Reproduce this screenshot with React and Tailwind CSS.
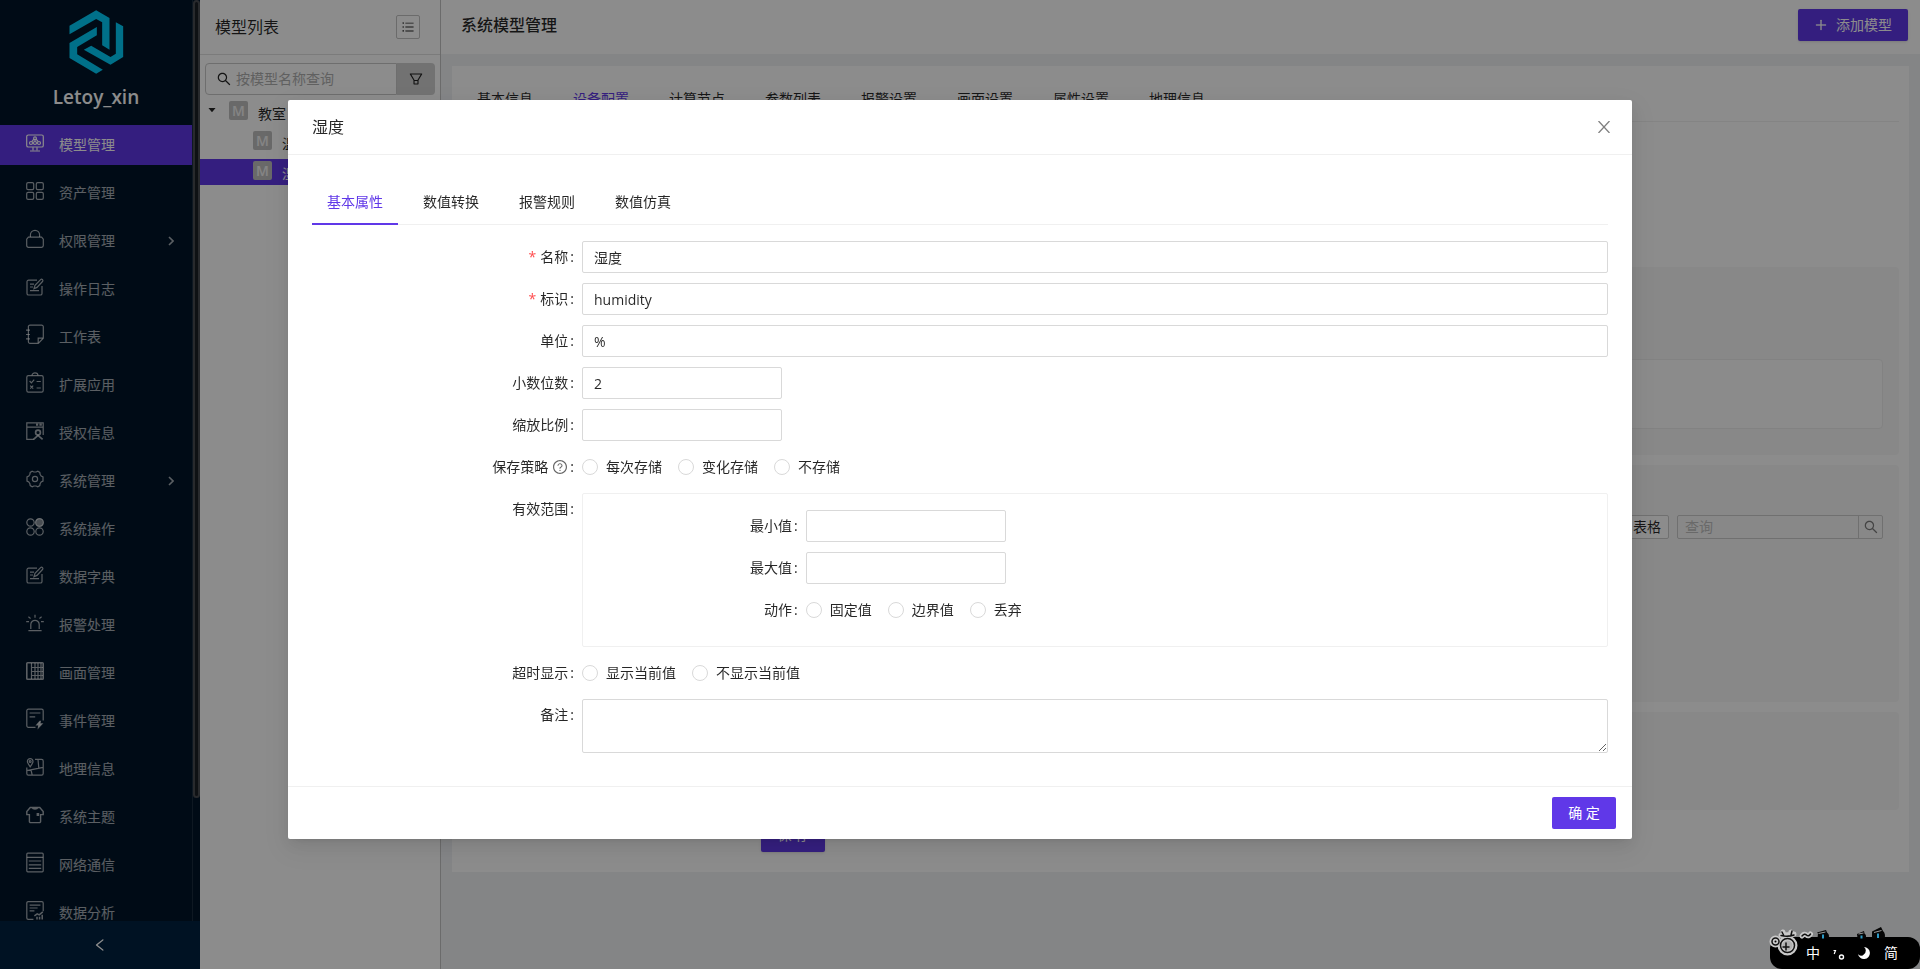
import React from "react";
import {
  AiOutlineFilter,
  AiOutlineLeft,
  AiOutlinePlus,
  AiOutlineQuestionCircle,
  AiOutlineSearch,
  AiOutlineUnorderedList,
  AiFillCaretDown,
} from "react-icons/ai";

const edit = (
  <>
    <path d="M11 2.2H2.6a1.6 1.6 0 0 0-1.6 1.6v11.6A1.6 1.6 0 0 0 2.6 17h11.8a1.6 1.6 0 0 0 1.6-1.6V8" />
    <path d="M8 10.6 9 7.4 14.6 1.6a1.3 1.3 0 0 1 1.9 1.9L11 9.4l-3 1.2Z M4 6.2h4 M4 9h3 M4 12.6h9" />
  </>
);

const icons = {
  model: (
    <>
      <rect x="0.7" y="1" width="16.6" height="12" rx="1.6" />
      <circle cx="9" cy="4.2" r="1.4" />
      <circle cx="5" cy="9" r="1.5" />
      <circle cx="9" cy="9" r="1.5" />
      <circle cx="13" cy="9" r="1.5" />
      <path d="M9 5.6v2M7.9 5.2 5.8 7.6M10.1 5.2l2.1 2.4M7 13.2v3M11 13.2v3M4 17h10" />
    </>
  ),
  asset: (
    <>
      <rect x="0.7" y="0.7" width="7" height="7" rx="1.4" />
      <rect x="10.3" y="0.7" width="7" height="7" rx="1.4" />
      <rect x="0.7" y="10.3" width="7" height="7" rx="1.4" />
      <rect x="10.3" y="10.3" width="7" height="7" rx="1.4" />
    </>
  ),
  lock: (
    <>
      <path d="M2.4 7.2h13.2l1.7 2v6.4a1.7 1.7 0 0 1-1.7 1.7H2.4a1.7 1.7 0 0 1-1.7-1.7V9.2l1.7-2Z" />
      <path d="M4.4 7V5a4.6 4.6 0 0 1 9.2 0v2" />
    </>
  ),
  edit,
  note: (
    <>
      <path d="M2.4 0.2A1.6 1.6 0 0 1 4-.9h11.6a1.7 1.7 0 0 1 1.7 1.7v11.400l-5 5.100H4a1.600 1.600 0 0 1-1.600-1.600V.2Z" />
      <path d="M12.2 17v-4.8H17M0 4.200h4M0 8.500h4M0 12.800h4" />
    </>
  ),
  clipboard: (
    <>
      <rect x="0.8" y="1.600" width="16.4" height="16.500" rx="1.6" />
      <path d="M6 1.600a3 2.800 0 0 1 6 0M3.6 7l1.8 1.8 2.8-3.2M10.6 7.500h4.2M4.2 11.600l3 3M7.2 11.600l-3 3M10.6 14h4.2" />
    </>
  ),
  license: (
    <>
      <path d="M8 17.3H.8V.8h16.4V13M.8 5.2h16.4" />
      <path d="M10 2.6h2.2M13.4 2.6h2.4" strokeWidth="2.2" />
      <circle cx="12" cy="10.6" r="2.4" strokeWidth="1.7" />
      <path d="M7.6 17.4 12 13.4l4.6 4" strokeWidth="1.7" />
    </>
  ),
  gear: (
    <>
      <path d="M6.2 1.2 7.8 2h2.4l1.6-.8 2 1.2.3 1.8 1.1 1.8 1.8.9v4.2l-1.8.9-1.1 1.8-.3 1.8-2 1.2-1.6-.8H7.8l-1.6.8-2-1.2-.3-1.8-1.1-1.8L1 11.100V6.900L2.800 6l1.100-1.800.300-1.800Z" />
      <circle cx="9" cy="9" r="2.6" />
    </>
  ),
  circles: (
    <>
      <circle cx="4.500" cy="4.500" r="3.700" />
      <circle cx="13.500" cy="4.500" r="3.900" fill="currentColor" fillOpacity="0.8" />
      <circle cx="4.500" cy="13.500" r="3.700" />
      <circle cx="13.500" cy="13.500" r="3.700" />
    </>
  ),
  alarm: (
    <path d="M4.800 15V10.500a4.200 4.200 0 0 1 8.400 0V15M2.400 16.600h13.200M9 .8v3M4.600 4.400 2.400 2.800M13.400 4.400l2.200-1.600M3 7.600H.2M17.800 7.600H15" />
  ),
  screen: (
    <>
      <rect x="0.8" y="0.8" width="16.4" height="16.400" rx="0.8" strokeWidth="1.600" />
      <path d="M5.500 1v16M6 5.500h11M6 9.500h11M6 13.500h11M9 1v16M12 1v16M15 1v16" strokeWidth="1.200" />
    </>
  ),
  event: (
    <>
      <path d="M9.500 17.300H2.400A1.600 1.600 0 0 1 .8 15.700V.8A1.600 1.600 0 0 1 2.400-.8h13.200a1.600 1.600 0 0 1 1.600 1.600v9.800M3.600 3h10.800M3.600 6.800h5.600" />
      <path d="m13.800 11.400-3 3.400h2l-.4 2.800 3.600-3.800h-2.200l.6-2.400Z" fill="currentColor" />
    </>
  ),
  map: (
    <>
      <path d="M9 1.400h6.600a1.600 1.600 0 0 1 1.600 1.600v12.600a1.600 1.600 0 0 1-1.600 1.600H2.400a1.600 1.600 0 0 1-1.600-1.600V9.400M.8 12.600l16.400-3.200M5 12l1.200 5M12 1.400l.8 8.600" />
      <path d="M4.200 8.800C2.400 6.400 1.400 5 1.400 3.400a2.800 2.800 0 0 1 5.600 0c0 1.600-1 3-2.800 5.400Z" />
      <circle cx="4.200" cy="3.400" r="0.900" />
    </>
  ),
  shirt: (
    <>
      <path d="M6 1.500H4.200L.8 5.500v3.100h2.600v6.800a1.200 1.200 0 0 0 1.200 1.200h8.800a1.200 1.200 0 0 0 1.200-1.200V8.600h2.600V5.500l-3.400-4H12c-1 2-5 2-6 0ZM6 1.500h6" strokeWidth="1.400" />
      <path d="M10.600 8.500h2.600" strokeWidth="3" />
    </>
  ),
  lines: (
    <>
      <rect x="0.8" y="-0.800" width="16.400" height="18.600" rx="1" />
      <path d="M.8 3.400h16.400M2.800 7h12.400M2.800 10.800h12.400M2.800 14.400h12.400" />
    </>
  ),
  report: (
    <>
      <path d="M7.400 17.300H2.200A1.400 1.400 0 0 1 .8 15.900V1A1.400 1.400 0 0 1 2.200-.4h13.600A1.400 1.400 0 0 1 17.200 1v8.200M3.600 3.200h10.800M3.600 6h8M3.600 8.800h4.800" />
      <path d="m8.400 13.800 2.800-2 2 1 3.600-3M11 17.400v-2.600M13.600 17.400v-2.600M16.200 17.400v-4.600" strokeWidth="1.500" />
    </>
  ),
};

const menu = [
  ["模型管理", "model"],
  ["资产管理", "asset"],
  ["权限管理", "lock", true],
  ["操作日志", "edit"],
  ["工作表", "note"],
  ["扩展应用", "clipboard"],
  ["授权信息", "license"],
  ["系统管理", "gear", true],
  ["系统操作", "circles"],
  ["数据字典", "edit"],
  ["报警处理", "alarm"],
  ["画面管理", "screen"],
  ["事件管理", "event"],
  ["地理信息", "map"],
  ["系统主题", "shirt"],
  ["网络通信", "lines"],
  ["数据分析", "report"],
];

function Logo() {
  return (
    <svg viewBox="205 28 170 198" className="h-[66px] w-[57px]" fill="#00cdfa" aria-hidden="true">
      <path d="M209 78 289 32l40 23v95l-22-13V68l-18-10-80 46Z" />
      <path d="M291 82v25l-59 35v22l77 46-20 12-80-47v-45Z" />
      <path d="m348 68 22 12v92l-38 23-80-45 22-12 58 34 16-10Z" />
    </svg>
  );
}

function Sidebar() {
  return (
    <aside className="flex w-[200px] shrink-0 flex-col bg-[#001529]">
      <div className="flex min-h-0 flex-1">
        <div className="min-w-0 flex-1 overflow-hidden">
          <div className="flex h-[125px] flex-col items-center pt-[9px]">
            <Logo />
            <div className="mt-2 text-[19px] leading-7 font-semibold text-white">Letoy_xin</div>
          </div>
          <nav className="flex flex-col gap-2">
            {menu.map(([label, icon, nested], i) => (
              <a
                key={label}
                href="#"
                className={
                  i === 0
                    ? "flex h-10 shrink-0 items-center bg-[#6038e8] pr-[18px] pl-[26px] text-white"
                    : "flex h-10 shrink-0 items-center pr-[18px] pl-[26px] text-white/65"
                }
              >
                <svg
                  viewBox="0 0 18 18"
                  className="mb-1 h-[18px] w-[18px] shrink-0 overflow-visible"
                  fill="none"
                  stroke="currentColor"
                  strokeWidth="1.2"
                  aria-hidden="true"
                >
                  {icons[icon]}
                </svg>
                <span className="ml-[15px] flex-1">{label}</span>
                {nested && (
                  <svg viewBox="0 0 6 10" className="h-[10px] w-[6px]" fill="none" stroke="currentColor" strokeWidth="1.6" aria-hidden="true">
                    <path d="m1 1 4 4-4 4" />
                  </svg>
                )}
              </a>
            ))}
          </nav>
        </div>
        <div className="w-2 border-l border-white/10">
          <div className="h-13/15 rounded-full border-2 border-[#4a4d52] bg-[#1b1f26]" />
        </div>
      </div>
      <button aria-label="收起菜单" className="flex h-12 items-center justify-center bg-[#002140] text-white">
        <AiOutlineLeft className="h-4 w-4" />
      </button>
    </aside>
  );
}

function Badge() {
  return (
    <span className="flex h-[19px] w-[19px] shrink-0 items-center justify-center rounded-xs bg-[#bfbfbf] text-sm leading-none font-semibold text-white/80">
      M
    </span>
  );
}

function ModelList() {
  return (
    <section className="w-60 shrink-0 overflow-hidden bg-white">
      <header className="flex h-[55px] items-center justify-between border-b border-[#e0e0e0] pr-5 pl-[15px]">
        <h2 className="text-base">模型列表</h2>
        <button aria-label="列表" className="flex h-6 w-6 items-center justify-center rounded-xs border border-[#c4c4c4]">
          <AiOutlineUnorderedList className="h-[14px] w-[14px]" />
        </button>
      </header>
      <div className="flex px-[5px] pt-2">
        <label className="flex h-8 min-w-0 flex-1 items-center gap-1 rounded-l-sm border border-[#c8c8c8] pl-[10px]">
          <AiOutlineSearch className="h-4 w-4 shrink-0" />
          <input
            aria-label="按模型名称查询"
            placeholder="按模型名称查询"
            className="w-full min-w-0 bg-transparent outline-none placeholder:text-[#b0b0b0]"
          />
        </label>
        <button aria-label="筛选" className="flex h-8 w-[38px] items-center justify-center rounded-r-sm bg-[#d0d0d0]">
          <AiOutlineFilter className="h-4 w-4" />
        </button>
      </div>
      <ul className="mt-1 flex flex-col gap-1">
        <li className="flex h-[26px] items-start pt-[2px] pl-[7px]">
          <AiFillCaretDown className="mt-1 mr-[12px] h-[10px] w-[10px]" />
          <Badge />
          <span className="ml-[10px] pt-[2px]">教室</span>
        </li>
        <li className="flex h-[26px] items-start pt-[2px] pl-[53px]">
          <Badge />
          <span className="ml-[10px] pt-[2px] whitespace-nowrap">温度</span>
        </li>
        <li className="flex h-[26px] items-start bg-[#6038e8] pt-[2px] pl-[53px] text-white">
          <Badge />
          <span className="ml-[10px] pt-[2px] whitespace-nowrap">湿度</span>
        </li>
      </ul>
    </section>
  );
}

function Tabs({ items, active }) {
  return (
    <div role="tablist" className="flex h-[46px] gap-[10px] border-b border-[#f0f0f0]">
      {items.map((t, i) => (
        <button
          key={t}
          role="tab"
          aria-selected={i === active}
          className={
            i === active
              ? "-mb-px border-b-2 border-[#6038e8] px-[15px] pt-[2px] text-[#6038e8]"
              : "-mb-px border-b-2 border-transparent px-[15px] pt-[2px]"
          }
        >
          {t}
        </button>
      ))}
    </div>
  );
}

function Main() {
  return (
    <main className="flex min-w-0 flex-1 flex-col border-l border-[#c4c4c4] bg-[#f0f2f5]">
      <header className="flex h-[54px] items-center justify-between bg-white pr-3 pb-1 pl-5">
        <h1 className="text-base font-medium">系统模型管理</h1>
        <button className="flex h-8 items-center gap-2 rounded-xs bg-[#6038e8] px-4 text-white shadow-sm">
          <AiOutlinePlus className="h-[14px] w-[14px] stroke-[24px]" />
          添加模型
        </button>
      </header>
      <div className="mx-[11px] mt-3 bg-white px-[10px] pt-[10px] pb-5">
        <Tabs
          items={["基本信息", "设备配置", "计算节点", "参数列表", "报警设置", "画面设置", "属性设置", "地理信息"]}
          active={1}
        />
        <div className="min-h-[145px]" />
        <div className="flex flex-col gap-[10px]">
          <section className="h-[188px] rounded-sm bg-[#f8f8f8] px-4 pt-[92px]">
            <div className="h-[70px] rounded-sm border border-[#ededed] bg-[#fdfdfd]" />
          </section>
          <section className="flex h-[237px] items-start justify-end gap-2 rounded-sm bg-[#f8f8f8] px-4 pt-[50px]">
            <button className="h-6 rounded-xs border border-[#cccccc] bg-white px-[7px] leading-[20px]">表格</button>
            <div className="flex h-6 w-[206px] rounded-xs border border-[#cccccc]">
              <input
                aria-label="查询"
                placeholder="查询"
                className="min-w-0 flex-1 bg-transparent px-[7px] outline-none placeholder:text-[#bfbfbf]"
              />
              <button aria-label="搜索" className="flex w-6 items-center justify-center border-l border-[#cccccc] text-black/50">
                <AiOutlineSearch className="h-4 w-4" />
              </button>
            </div>
          </section>
          <section className="h-[98px] rounded-sm bg-[#f8f8f8]" />
          <div className="grid grid-cols-24">
            <button className="col-start-6 h-8 w-16 rounded-xs bg-[#6038e8] pb-[2px] text-white shadow-sm">保 存</button>
          </div>
        </div>
      </div>
    </main>
  );
}

function Row({ label, htmlFor, required, help, children }) {
  return (
    <div className="grid grid-cols-24">
      <label htmlFor={htmlFor} className="col-span-5 flex h-8 items-center justify-end pr-2">
        {required && <span className="mr-1 text-[#ff4d4f]">*</span>}
        {label}
        {help && <AiOutlineQuestionCircle className="ml-1 h-4 w-4 text-black/60" />}
        <span className="ml-[2px]">:</span>
      </label>
      <div className="col-span-19">{children}</div>
    </div>
  );
}

function TextField({ id, value, short }) {
  return (
    <input
      id={id}
      defaultValue={value}
      className={
        short
          ? "block h-8 w-[200px] rounded-xs border border-[#d9d9d9] px-[11px] outline-none"
          : "block h-8 w-full rounded-xs border border-[#d9d9d9] px-[11px] outline-none"
      }
    />
  );
}

function Radios({ id, options }) {
  return (
    <div id={id} role="radiogroup" className="flex h-8 items-center gap-4">
      {options.map((o) => (
        <label key={o} className="flex items-center gap-2">
          <input type="radio" name={id} className="h-4 w-4 appearance-none rounded-full border border-[#d9d9d9] bg-white" />
          {o}
        </label>
      ))}
    </div>
  );
}

function Modal() {
  return (
    <div
      role="dialog"
      aria-label="湿度"
      className="w-[70%] rounded-xs bg-white shadow-[0_3px_6px_-4px_rgba(0,0,0,0.12),0_6px_16px_0_rgba(0,0,0,0.08),0_9px_28px_8px_rgba(0,0,0,0.05)]"
    >
      <header className="flex h-[55px] items-center justify-between border-b border-[#f0f0f0] px-6">
        <h2 className="text-base">湿度</h2>
        <button aria-label="关闭" className="-mr-1 p-[2px] text-black/50">
          <svg viewBox="0 0 12 12" className="h-3 w-3" fill="none" stroke="currentColor" strokeWidth="1.3" aria-hidden="true">
            <path d="m0.500 0 11 12M11.500 0l-11 12" />
          </svg>
        </button>
      </header>
      <div className="p-6 pb-[33px]">
        <Tabs items={["基本属性", "数值转换", "报警规则", "数值仿真"]} active={0} />
        <form className="mt-4 flex flex-col gap-[10px]">
          <Row label="名称" htmlFor="name" required>
            <TextField id="name" value="湿度" />
          </Row>
          <Row label="标识" htmlFor="code" required>
            <TextField id="code" value="humidity" />
          </Row>
          <Row label="单位" htmlFor="unit">
            <TextField id="unit" value="%" />
          </Row>
          <Row label="小数位数" htmlFor="digits">
            <TextField id="digits" value="2" short />
          </Row>
          <Row label="缩放比例" htmlFor="scale">
            <TextField id="scale" short />
          </Row>
          <Row label="保存策略" help>
            <Radios id="policy" options={["每次存储", "变化存储", "不存储"]} />
          </Row>
          <Row label="有效范围">
            <div className="flex flex-col gap-[10px] rounded-xs border border-[#f0f0f0] px-4 pt-4 pb-5">
              <Row label="最小值" htmlFor="min">
                <TextField id="min" short />
              </Row>
              <Row label="最大值" htmlFor="max">
                <TextField id="max" short />
              </Row>
              <Row label="动作">
                <Radios id="action" options={["固定值", "边界值", "丢弃"]} />
              </Row>
            </div>
          </Row>
          <Row label="超时显示">
            <Radios id="timeout" options={["显示当前值", "不显示当前值"]} />
          </Row>
          <Row label="备注" htmlFor="remark">
            <textarea
              id="remark"
              className="block h-[54px] w-full rounded-xs border border-[#d9d9d9] px-[11px] py-1 outline-none"
            />
          </Row>
        </form>
      </div>
      <footer className="flex justify-end border-t border-[#f0f0f0] px-4 py-[10px]">
        <button className="h-8 w-16 rounded-xs bg-[#6038e8] text-white">确 定</button>
      </footer>
    </div>
  );
}

function ImeBar() {
  return (
    <div className="fixed right-0 bottom-0 z-20 flex h-8 w-[150px] items-center rounded-xl bg-black pl-9 text-white">
      <svg viewBox="0 0 120 30" className="absolute -top-[10px] left-0 h-[30px] w-[120px] overflow-visible" aria-hidden="true">
        <g fill="none" strokeLinecap="round" strokeLinejoin="round">
          <g stroke="#c9c9c9" strokeWidth="5">
            <circle cx="5.500" cy="14.500" r="3.500" />
            <circle cx="17.500" cy="18.500" r="7.500" fill="#b0b0b0" />
            <path d="M11 8.500 24 7M13 5l1 4M21 5l1 3M32 9q2.500-3 4.500-1t4-1" />
          </g>
          <g stroke="#111" strokeWidth="1.500">
            <circle cx="5.500" cy="14.500" r="3.500" />
            <circle cx="17.500" cy="18.500" r="7" />
            <path d="M11 8.500q7 1.500 13-.5M12 5l2 4M22 4l-1 4M32 9q2.500-3 4.500-1t4-1M13 20h6M16 16v7" />
          </g>
        </g>
        <g fill="#050505">
          <path d="M47 5.500 56 3l1 2.500q3 2 1.500 6H47.500l.5-5Z" />
          <path d="M87 7l7-3 .5 2.500q2.500 2 1 5H87.500Z" />
          <path d="M102 4.500 111 0l2 4q3 3 1.500 7.500H102Z" />
        </g>
        <path d="M48.500 6.500l7-1.500M88.500 7l5-1M104 5.500l7.500-2" stroke="#999" strokeWidth="1" />
        <path d="M53 7.500v4M91.500 8.500v3M108 6.500v4.500" stroke="#2b9ac6" strokeWidth="2" />
      </svg>
      <span className="text-sm">中</span>
      <svg viewBox="0 0 16 16" className="ml-3 h-4 w-4" aria-hidden="true">
        <path d="M1.500 5.500h2L2.200 9" stroke="#fff" strokeWidth="1.200" fill="none" />
        <circle cx="9.500" cy="12" r="2" fill="none" stroke="#fff" strokeWidth="1.400" />
      </svg>
      <svg viewBox="0 0 12 12" className="ml-[10px] h-3 w-3 shrink-0" fill="#fff" aria-hidden="true">
        <path d="M6 0a6 6 0 1 1-6 7a3.600 3.600 0 0 0 6 .2A4.500 4.500 0 0 0 6 0Z" />
      </svg>
      <span className="ml-[14px] text-sm">简</span>
    </div>
  );
}

export default function App() {
  return (
    <div className="flex h-screen overflow-hidden font-['Open_Sans','Noto_Sans_CJK_SC',sans-serif] text-sm leading-[22px] text-black/85">
      <Sidebar />
      <ModelList />
      <Main />
      <div className="fixed inset-0 z-10 flex items-start justify-center overflow-auto bg-black/45 pt-[100px]">
        <Modal />
      </div>
      <ImeBar />
    </div>
  );
}
